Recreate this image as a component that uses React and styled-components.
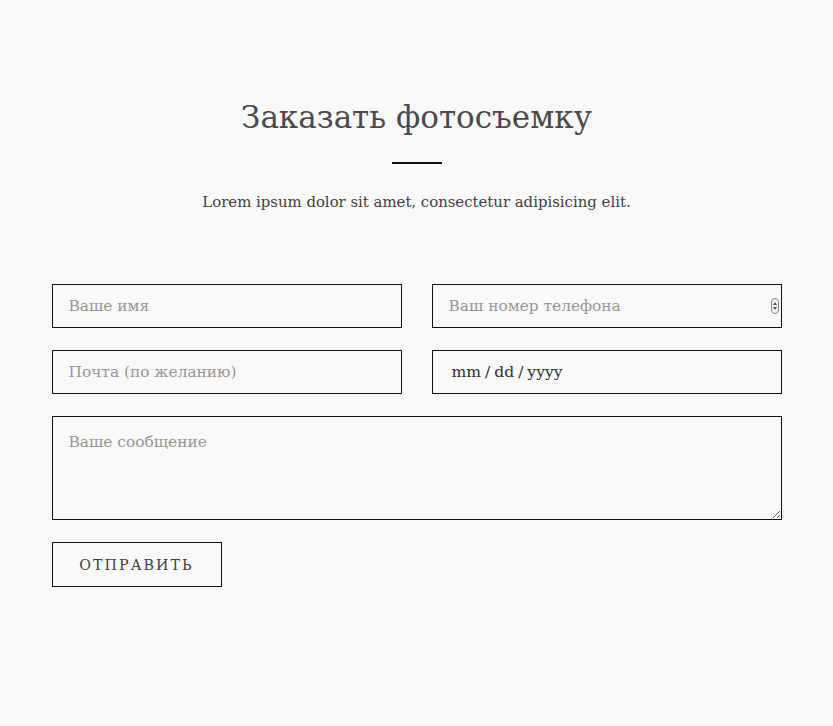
import React from "react";
import styled, { createGlobalStyle } from "styled-components";

const Global = createGlobalStyle`
  html, body { margin: 0; padding: 0; background: #f9f9f9; }
  body { font-family: "DejaVu Serif", "Liberation Serif", serif; }
  * { box-sizing: border-box; }
`;

const Page = styled.div`
  width: 833px;
  min-height: 726px;
  background: #f9f9f9;
  padding-top: 96px;
`;

const Section = styled.section`
  width: 730px;
  margin: 0 auto;
  display: flex;
  flex-direction: column;
  align-items: center;
`;

const Title = styled.h2`
  margin: 0;
  font-family: "DejaVu Serif", serif;
  font-weight: 400;
  font-size: 31px;
  line-height: 42px;
  color: #4a4a4a;
`;

const Divider = styled.div`
  width: 50px;
  height: 2px;
  background: #111;
  margin-top: 24px;
`;

const Lead = styled.p`
  margin: 26px 0 0;
  font-size: 14.9px;
  line-height: 24px;
  color: #3f3f3f;
`;

const Form = styled.form`
  width: 100%;
  margin-top: 70px;
  display: grid;
  grid-template-columns: 1fr 1fr;
  column-gap: 30px;
  row-gap: 22px;
`;

const Field = styled.div`
  position: relative;
  height: 44px;
  border: 1px solid #111;
  display: flex;
  align-items: center;
  padding: 0 16px;
`;

const Input = styled.input`
  flex: 1;
  min-width: 0;
  border: none;
  outline: none;
  background: transparent;
  padding: 0;
  font-family: inherit;
  font-size: 15.4px;
  color: #444;
  &::placeholder { color: #9a9593; }
`;

const DateText = styled.span`
  padding-left: 3px;
  font-size: 15.6px;
  color: #2e2e2e;
  word-spacing: -1px;
`;

const TextArea = styled.textarea`
  grid-column: 1 / -1;
  height: 104px;
  border: 1px solid #111;
  background: transparent;
  resize: vertical;
  padding: 16px 16px;
  font-family: inherit;
  font-size: 15.4px;
  color: #444;
  outline: none;
  &::placeholder { color: #9a9593; }
`;

const Spinner = styled.svg`
  position: absolute;
  right: 2px;
  top: 13px;
`;

const Submit = styled.button`
  grid-column: 1 / -1;
  justify-self: start;
  width: 170px;
  height: 45px;
  border: 1px solid #111;
  background: transparent;
  font-family: inherit;
  font-size: 14.3px;
  letter-spacing: 2px;
  color: #3f3f3f;
  cursor: pointer;
`;

export default function App() {
  return (
    <Page>
      <Global />
      <Section>
        <Title>Заказать фотосъемку</Title>
        <Divider />
        <Lead>Lorem ipsum dolor sit amet, consectetur adipisicing elit.</Lead>
        <Form onSubmit={(e) => e.preventDefault()}>
          <Field>
            <Input type="text" placeholder="Ваше имя" />
          </Field>
          <Field>
            <Input type="text" placeholder="Ваш номер телефона" />
            <Spinner width="8" height="16" viewBox="0 0 8 16">
              <rect x="0.5" y="0.5" width="7" height="15" rx="3.5" fill="#f4f4f4" stroke="#888" />
              <path d="M4 4 L6 7 L2 7 Z" fill="#555" />
              <path d="M4 12 L6 9 L2 9 Z" fill="#555" />
            </Spinner>
          </Field>
          <Field>
            <Input type="email" placeholder="Почта (по желанию)" />
          </Field>
          <Field>
            <DateText>mm / dd / yyyy</DateText>
          </Field>
          <TextArea placeholder="Ваше сообщение" />
          <Submit type="submit">ОТПРАВИТЬ</Submit>
        </Form>
      </Section>
    </Page>
  );
}
